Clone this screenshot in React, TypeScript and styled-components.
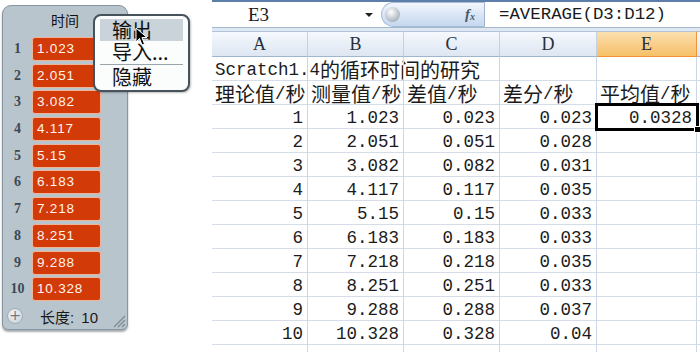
import React from 'react';
import styled, { createGlobalStyle } from 'styled-components';

const GlobalStyle = createGlobalStyle`
  html, body {
    margin: 0;
    padding: 0;
    background: #ffffff;
  }
  body {
    width: 700px;
    height: 352px;
    overflow: hidden;
  }
`;

const times = ['1.023', '2.051', '3.082', '4.117', '5.15', '6.183', '7.218', '8.251', '9.288', '10.328'];
const diffs = ['0.023', '0.051', '0.082', '0.117', '0.15', '0.183', '0.218', '0.251', '0.288', '0.328'];
const steps = ['0.023', '0.028', '0.031', '0.035', '0.033', '0.033', '0.035', '0.033', '0.037', '0.04'];

const Page = styled.div`
  display: flex;
  width: 700px;
  height: 352px;
  overflow: hidden;
`;

/* ---------- Scratch list monitor ---------- */

const LeftArea = styled.div`
  position: relative;
  width: 212px;
  flex-shrink: 0;
  padding: 5px 0 0 2px;
  box-sizing: border-box;
`;

const Monitor = styled.div`
  width: 126px;
  height: 325px;
  box-sizing: border-box;
  background: #b9c5cd;
  border: 1px solid #8795a0;
  border-radius: 9px 9px 6px 6px;
  box-shadow: 0 2px 2px rgba(60, 70, 80, 0.45);
  display: flex;
  flex-direction: column;
`;

const MonitorTitle = styled.div`
  height: 30px;
  line-height: 28px;
  text-align: center;
  font-family: 'Noto Sans CJK SC', sans-serif;
  font-size: 14px;
  color: #111;
`;

const ItemList = styled.div`
  display: flex;
  flex-direction: column;
  gap: 2.7px;
  padding-top: 1px;
`;

const ItemRow = styled.div`
  display: flex;
  align-items: center;
`;

const ItemIndex = styled.div`
  width: 29px;
  text-align: center;
  font-family: 'Liberation Serif', serif;
  font-weight: bold;
  font-size: 14px;
  color: #3b4955;
`;

const ItemCell = styled.div`
  width: 69px;
  height: 24px;
  box-sizing: border-box;
  background: #d23a08;
  border: 1px solid #efb39a;
  border-radius: 3px;
  padding-left: 4px;
  line-height: 22px;
  font-family: 'Liberation Sans', sans-serif;
  font-size: 13.5px;
  letter-spacing: 0.8px;
  color: #fff4ee;
`;

const MonitorFooter = styled.div`
  margin-top: auto;
  height: 26px;
  display: flex;
  align-items: center;
  position: relative;
  padding-left: 4px;
`;

const AddButton = styled.div`
  width: 14px;
  height: 14px;
  border-radius: 50%;
  background: radial-gradient(circle at 40% 35%, #f2f5f7, #c3ccd3);
  border: 1px solid #a3afb8;
  color: #6c7882;
  font-family: 'DejaVu Sans', sans-serif;
  font-size: 14px;
  line-height: 13px;
  text-align: center;
`;

const LengthLabel = styled.div`
  margin-left: 17px;
  font-family: 'Liberation Sans', 'Noto Sans CJK SC', sans-serif;
  font-size: 15px;
  word-spacing: 3px;
  color: #1a1a1a;
`;

const Grip = styled.svg`
  position: absolute;
  right: 1px;
  bottom: 1px;
`;

const Menu = styled.div`
  position: absolute;
  left: 93px;
  top: 14px;
  width: 97px;
  height: 78px;
  box-sizing: border-box;
  background: #fbfcfc;
  border: 2px solid #46525c;
  border-radius: 8px;
  padding: 3px 5px;
  box-shadow: 1px 1px 2px rgba(0, 0, 0, 0.25);
`;

const MenuItem = styled.div<{ $active?: boolean }>`
  height: 22px;
  line-height: 22px;
  padding-left: 12px;
  font-family: 'Noto Sans CJK SC', sans-serif;
  font-size: 20px;
  color: #111;
  white-space: nowrap;
  background: ${(p) => (p.$active ? '#c9d3d9' : 'transparent')};
`;

const MenuSeparator = styled.div`
  height: 1px;
  margin: 1px 0 1px;
  background: #9aa4ab;
`;

const Cursor = styled.svg`
  position: absolute;
  left: 135px;
  top: 27px;
`;

/* ---------- Excel sheet ---------- */

const Sheet = styled.div`
  flex: 1;
  display: flex;
  flex-direction: column;
  background: #dfe7f2;
`;

const FormulaBar = styled.div`
  height: 25px;
  display: flex;
  background: #ffffff;
  border-top: 2px solid #5d7ea8;
  border-bottom: 1px solid #a4b8d0;
  margin-bottom: 3px;
`;

const NameBox = styled.div`
  width: 150px;
  padding-left: 36px;
  box-sizing: border-box;
  font-family: 'Liberation Serif', serif;
  font-size: 19px;
  line-height: 25px;
  color: #1a1a1a;
`;

const DropArrow = styled.div`
  width: 0;
  height: 0;
  margin: 11px 8px 0 3px;
  border-left: 4px solid transparent;
  border-right: 4px solid transparent;
  border-top: 4px solid #222;
`;

const Pill = styled.div`
  width: 104px;
  box-sizing: border-box;
  display: flex;
  align-items: center;
  justify-content: space-between;
  padding: 0 9px 0 3px;
  border: 1px solid #a6bbd5;
  border-right-color: #9fb3cc;
  border-radius: 13px 0 0 13px;
  background: linear-gradient(#f3f7fd, #d7e4f5 55%, #c6d8ef);
`;

const Knob = styled.div`
  width: 15px;
  height: 15px;
  border-radius: 50%;
  background: radial-gradient(circle at 40% 35%, #ffffff, #b8c0c8 60%, #8c96a0);
`;

const Fx = styled.span`
  font-family: 'Liberation Serif', serif;
  font-style: italic;
  font-weight: bold;
  font-size: 15px;
  color: #4c5a66;
  & sub {
    font-size: 10px;
    vertical-align: -1px;
  }
`;

const FormulaText = styled.div`
  flex: 1;
  padding-left: 14px;
  font-family: 'Liberation Mono', monospace;
  font-size: 17.4px;
  line-height: 25px;
  color: #1a1a1a;
  white-space: nowrap;
`;

const Grid = styled.div`
  display: grid;
  grid-template-columns: 96px 96px 96px 97px 100px 1fr;
  grid-template-rows: 26px;
  grid-auto-rows: 24px;
  background: #ffffff;
  flex: 1;
  overflow: hidden;
`;

const ColHead = styled.div<{ $active?: boolean }>`
  box-sizing: border-box;
  border-top: 1px solid #b2c4da;
  border-right: 1px solid ${(p) => (p.$active ? '#f29436' : '#c3d1e2')};
  border-bottom: 1px solid ${(p) => (p.$active ? '#f29436' : '#9eb6ce')};
  background: ${(p) =>
    p.$active ? 'linear-gradient(#fbe0b0, #f9cf8c 50%, #f6c168)' : 'linear-gradient(#f6f9fd, #e9eff8 50%, #dde6f2)'};
  text-align: center;
  line-height: 25px;
  font-family: 'Liberation Serif', serif;
  font-size: 18px;
  color: #27313c;
`;

const Cell = styled.div<{ $align?: 'left' | 'right'; $selected?: boolean }>`
  position: relative;
  box-sizing: border-box;
  border-right: 1px solid #cbd6e6;
  border-bottom: 1px solid #d5dde9;
  padding: 0 4px 0 3px;
  display: flex;
  align-items: flex-end;
  justify-content: ${(p) => (p.$align === 'left' ? 'flex-start' : 'flex-end')};
  font-family: 'Liberation Mono', 'Noto Sans CJK SC', monospace;
  font-size: 17.5px;
  line-height: 20px;
  color: #1b1b1b;
  white-space: nowrap;
  overflow: visible;
  z-index: ${(p) => (p.$selected ? 2 : 1)};
  outline: ${(p) => (p.$selected ? '3px solid #000' : 'none')};
  outline-offset: -1px;
  &::after {
    content: '';
    display: ${(p) => (p.$selected ? 'block' : 'none')};
    position: absolute;
    right: -5px;
    bottom: -5px;
    width: 5px;
    height: 5px;
    background: #000;
    border: 1px solid #fff;
  }
`;

const Han = styled.span`
  font-family: 'Noto Sans CJK SC', sans-serif;
  font-size: 20px;
  line-height: 20px;
`;

const Mixed = ({ text }: { text: string }) => (
  <>
    {text.split(/([\u4e00-\u9fff]+)/).map((part, i) =>
      /[\u4e00-\u9fff]/.test(part) ? <Han key={i}>{part}</Han> : part
    )}
  </>
);

const columns = ['A', 'B', 'C', 'D', 'E', ''];
const headings = ['理论值/秒', '测量值/秒', '差值/秒', '差分/秒', '平均值/秒'];

const App = () => {
  return (
    <Page>
      <GlobalStyle />
      <LeftArea>
        <Monitor>
          <MonitorTitle>时间</MonitorTitle>
          <ItemList>
            {times.map((t, i) => (
              <ItemRow key={t}>
                <ItemIndex>{i + 1}</ItemIndex>
                <ItemCell>{t}</ItemCell>
              </ItemRow>
            ))}
          </ItemList>
          <MonitorFooter>
            <AddButton>+</AddButton>
            <LengthLabel>长度: 10</LengthLabel>
            <Grip width="14" height="14" viewBox="0 0 14 14">
              <path d="M13 2 L2 13 M13 6 L6 13 M13 10 L10 13" stroke="#7d8a94" strokeWidth="1.2" />
            </Grip>
          </MonitorFooter>
        </Monitor>
        <Menu>
          <MenuItem $active>输出</MenuItem>
          <MenuItem>导入...</MenuItem>
          <MenuSeparator />
          <MenuItem>隐藏</MenuItem>
        </Menu>
        <Cursor width="13" height="20" viewBox="0 0 13 20">
          <path d="M1 1 L1 15 L4.5 11.5 L7 18 L9.5 17 L7 10.5 L12 10.5 Z" fill="#000" stroke="#fff" strokeWidth="1" />
        </Cursor>
      </LeftArea>

      <Sheet>
        <FormulaBar>
          <NameBox>E3</NameBox>
          <DropArrow />
          <Pill>
            <Knob />
            <Fx>
              f<sub>x</sub>
            </Fx>
          </Pill>
          <FormulaText>=AVERAGE(D3:D12)</FormulaText>
        </FormulaBar>
        <Grid>
          {columns.map((c) => (
            <ColHead key={'h' + c} $active={c === 'E'}>
              {c}
            </ColHead>
          ))}

          <Cell $align="left">
            <Mixed text="Scratch1.4的循环时间的研究" />
          </Cell>
          {columns.slice(1).map((c) => (
            <Cell key={'r1' + c} />
          ))}

          {headings.map((h) => (
            <Cell key={h} $align="left">
              <Mixed text={h} />
            </Cell>
          ))}
          <Cell />

          {times.map((t, i) => (
            <React.Fragment key={'row' + i}>
              <Cell>{i + 1}</Cell>
              <Cell>{t}</Cell>
              <Cell>{diffs[i]}</Cell>
              <Cell>{steps[i]}</Cell>
              <Cell $selected={i === 0}>{i === 0 ? '0.0328' : ''}</Cell>
              <Cell />
            </React.Fragment>
          ))}

          {columns.map((c) => (
            <Cell key={'last' + c} />
          ))}
        </Grid>
      </Sheet>
    </Page>
  );
};

export default App;
